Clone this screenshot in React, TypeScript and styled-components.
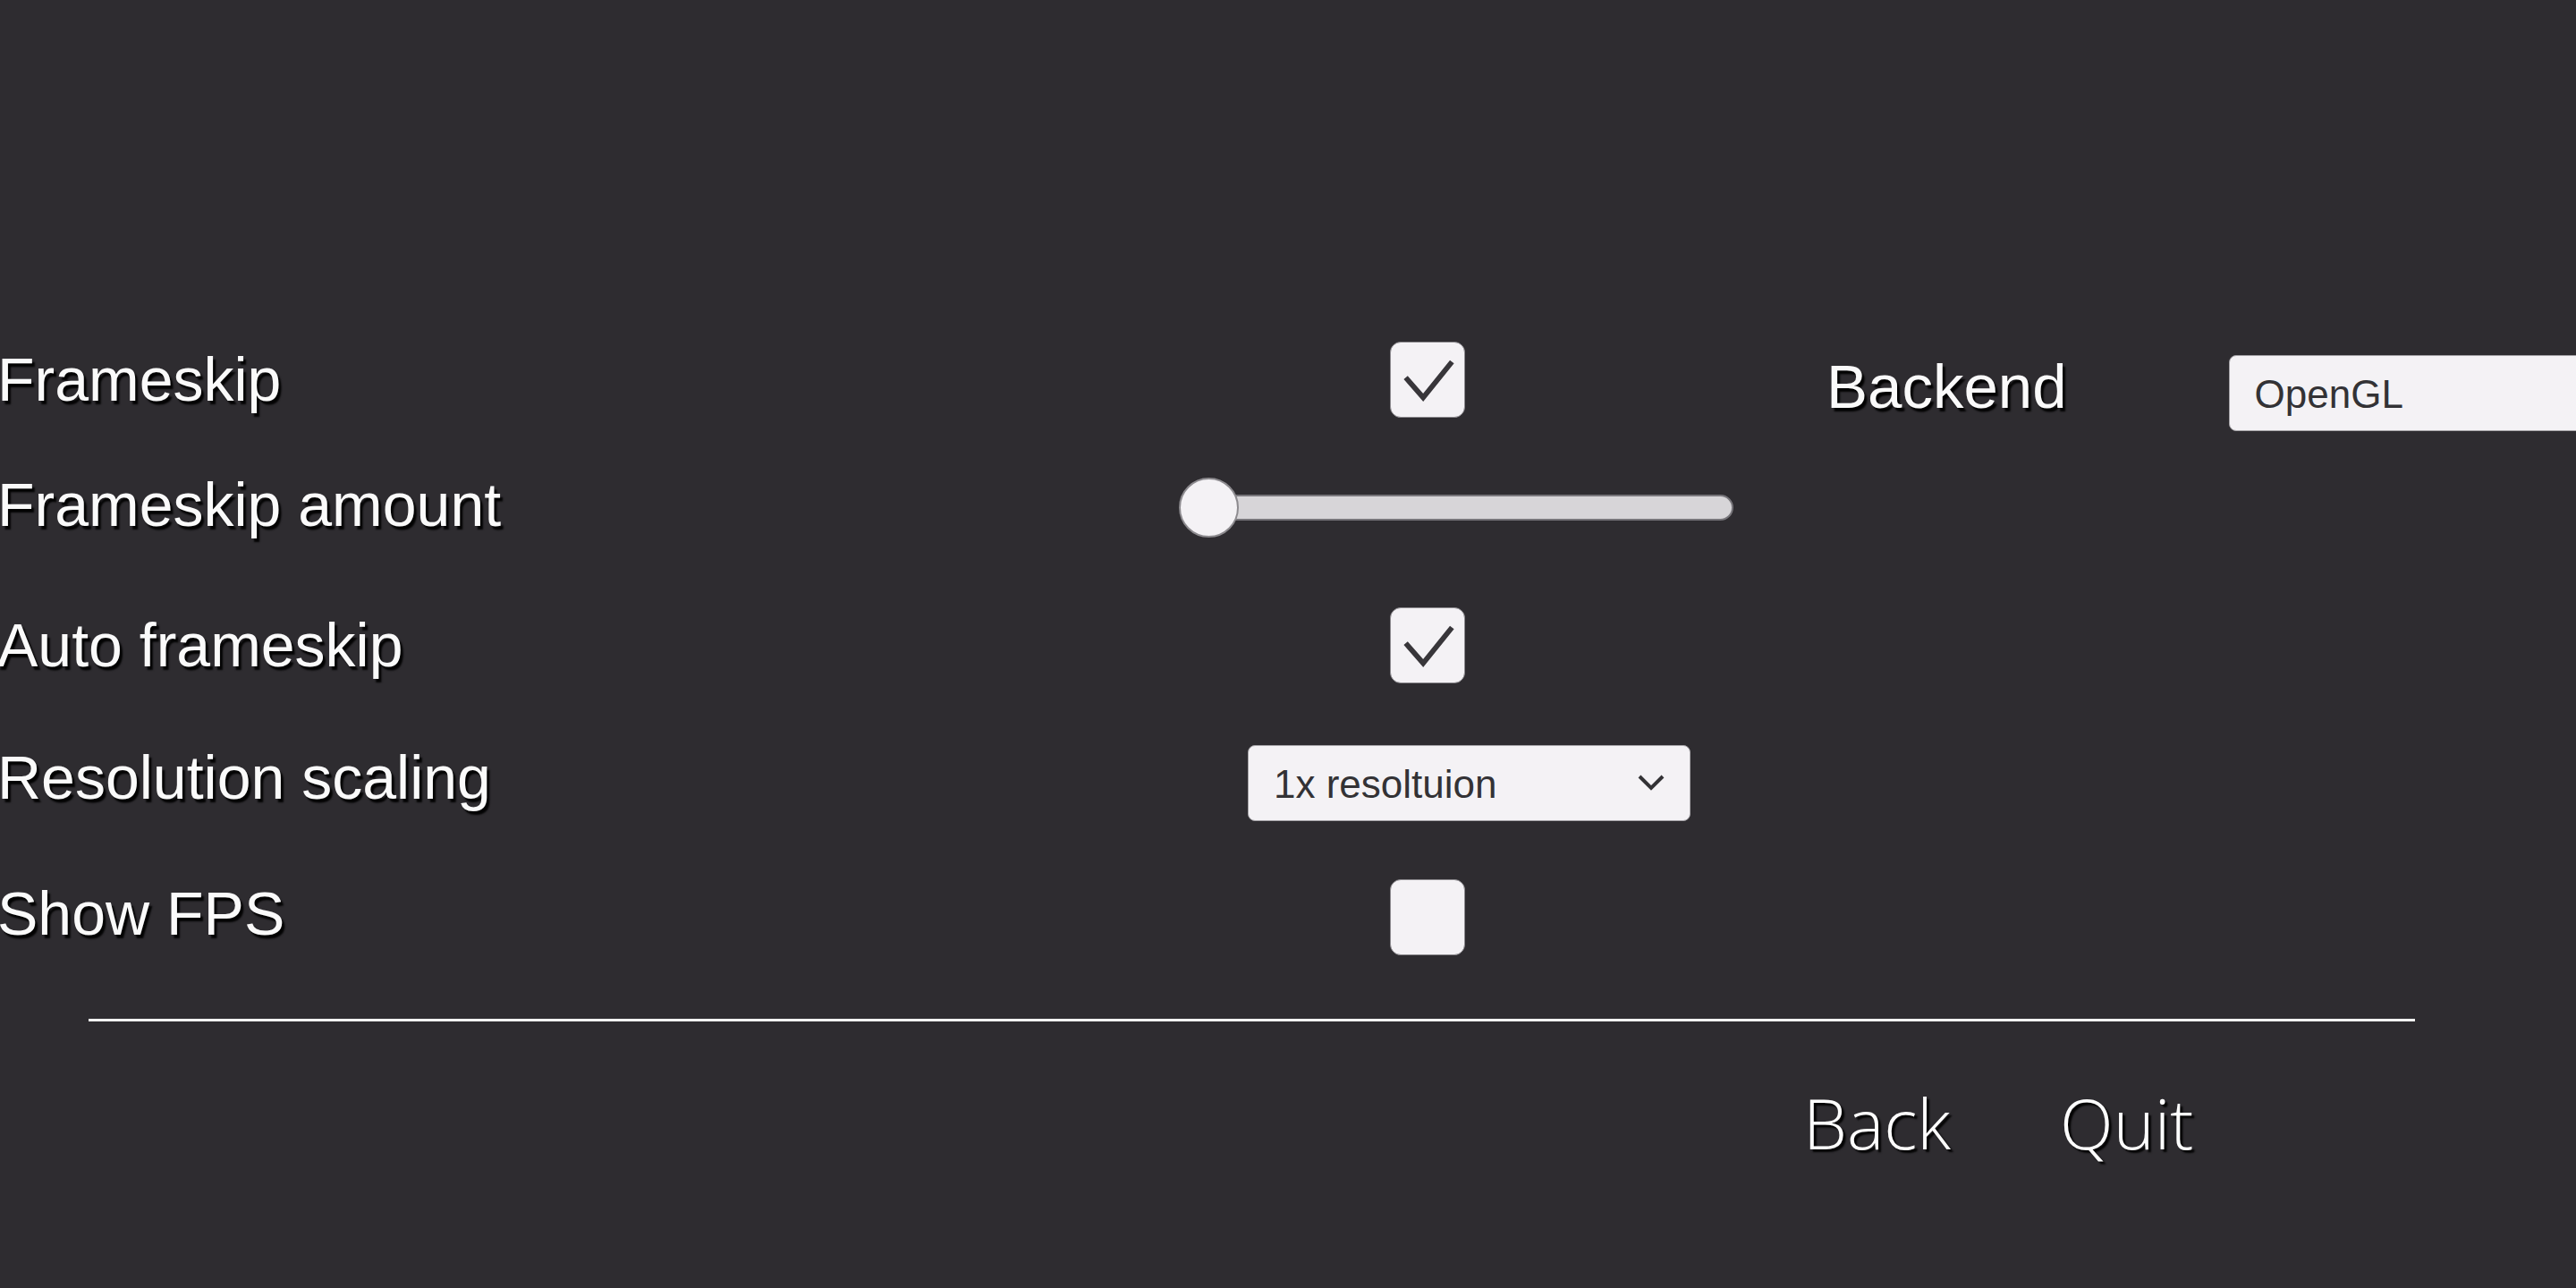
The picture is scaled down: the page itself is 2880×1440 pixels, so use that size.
import React from 'react';
import styled, { createGlobalStyle } from 'styled-components';

const GlobalStyle = createGlobalStyle`
  html, body {
    margin: 0;
    padding: 0;
    background: #2e2c30;
  }
`;

const Screen = styled.div`
  width: 2880px;
  height: 1440px;
  overflow: hidden;
  background: #2e2c30;
  padding-top: 350px;
  box-sizing: border-box;
  font-family: 'Liberation Sans', Arial, sans-serif;
`;

const Row = styled.div<{ h: number }>`
  display: flex;
  align-items: center;
  height: ${({ h }) => h}px;
`;

const LabelCell = styled.div`
  width: 1318px;
  flex-shrink: 0;
`;

const Label = styled.span<{ lift?: number }>`
  display: inline-block;
  margin-left: -3px;
  margin-top: ${({ lift }) => (lift ? -lift * 2 : 0)}px;
  font-size: 68px;
  line-height: 1;
  color: #fafafa;
  text-shadow: 3px 4px 2px rgba(0, 0, 0, 0.95);
  white-space: nowrap;
`;

const ControlCell = styled.div`
  width: 620px;
  flex-shrink: 0;
  display: flex;
  align-items: center;
`;

const CheckBox = styled.div`
  margin-left: 236px;
  width: 84px;
  height: 85px;
  box-sizing: border-box;
  border-radius: 12px;
  background: #f4f2f5;
  border: 1px solid #8d8b8f;
  display: flex;
  align-items: center;
  justify-content: center;
`;

const SliderBox = styled.div`
  position: relative;
  width: 620px;
  height: 67px;
  display: flex;
  align-items: center;
`;

const Track = styled.div`
  margin-left: 22px;
  flex: 1;
  height: 29px;
  box-sizing: border-box;
  border-radius: 15px;
  background: #d7d5d8;
  border: 2px solid #77757a;
`;

const Thumb = styled.div`
  position: absolute;
  left: 0;
  top: 0;
  width: 67px;
  height: 67px;
  box-sizing: border-box;
  border-radius: 50%;
  background: #f4f2f5;
  border: 2px solid #8d8b8f;
`;

const Select = styled.div<{ w: number; indent?: number }>`
  margin-left: ${({ indent }) => indent || 0}px;
  width: ${({ w }) => w}px;
  height: 85px;
  box-sizing: border-box;
  flex-shrink: 0;
  border-radius: 8px;
  background: #f4f2f5;
  border: 1px solid #a6a4a8;
  padding: 0 28px;
  display: flex;
  align-items: center;
  justify-content: space-between;
  font-size: 44px;
  color: #333235;
  white-space: nowrap;
`;

const SelectText = styled.span`
  line-height: 1;
  margin-top: 4px;
`;

const Backend = styled.span`
  margin-left: 104px;
  margin-top: 16px;
  font-size: 69px;
  line-height: 1;
  color: #fafafa;
  text-shadow: 3px 4px 2px rgba(0, 0, 0, 0.95);
`;

const BackendSelect = styled(Select)`
  margin-left: 181px;
  margin-top: 30px;
`;

const Divider = styled.div`
  margin: 33px 0 0 99px;
  width: 2601px;
  height: 3px;
  background: #f2f2f2;
`;

const Buttons = styled.div`
  display: flex;
  gap: 122px;
  padding-left: 2016px;
  margin-top: 74px;
`;

const MenuButton = styled.button`
  background: none;
  border: none;
  padding: 0;
  font-family: 'Open Sans', 'Noto Sans', sans-serif;
  font-weight: 300;
  font-size: 78px;
  line-height: 1;
  color: #ffffff;
  text-shadow: 3px 3px 2px rgba(0, 0, 0, 0.95);
  cursor: pointer;
`;

const Check = () => (
  <svg width="84" height="85" viewBox="0 0 84 85">
    <polyline
      points="17,40 37,63 70,22"
      fill="none"
      stroke="#38363a"
      strokeWidth="6"
      strokeLinejoin="miter"
    />
  </svg>
);

const Chevron = () => (
  <svg width="30" height="18" viewBox="0 0 30 18">
    <polyline points="2,2 15,15 28,2" fill="none" stroke="#333235" strokeWidth="4" />
  </svg>
);

const App: React.FC = () => {
  return (
    <Screen>
      <GlobalStyle />
      <Row h={148}>
        <LabelCell>
          <Label>Frameskip</Label>
        </LabelCell>
        <ControlCell>
          <CheckBox>
            <Check />
          </CheckBox>
        </ControlCell>
        <Backend>Backend</Backend>
        <BackendSelect w={520}>
          <SelectText>OpenGL</SelectText>
        </BackendSelect>
      </Row>
      <Row h={138}>
        <LabelCell>
          <Label lift={3}>Frameskip amount</Label>
        </LabelCell>
        <ControlCell>
          <SliderBox>
            <Track />
            <Thumb />
          </SliderBox>
        </ControlCell>
      </Row>
      <Row h={170}>
        <LabelCell>
          <Label>Auto frameskip</Label>
        </LabelCell>
        <ControlCell>
          <CheckBox>
            <Check />
          </CheckBox>
        </ControlCell>
      </Row>
      <Row h={138}>
        <LabelCell>
          <Label lift={6}>Resolution scaling</Label>
        </LabelCell>
        <ControlCell>
          <Select w={495} indent={77}>
            <SelectText>1x resoltuion</SelectText>
            <Chevron />
          </Select>
        </ControlCell>
      </Row>
      <Row h={162}>
        <LabelCell>
          <Label lift={4}>Show FPS</Label>
        </LabelCell>
        <ControlCell>
          <CheckBox />
        </ControlCell>
      </Row>
      <Divider />
      <Buttons>
        <MenuButton>Back</MenuButton>
        <MenuButton>Quit</MenuButton>
      </Buttons>
    </Screen>
  );
};

export default App;
